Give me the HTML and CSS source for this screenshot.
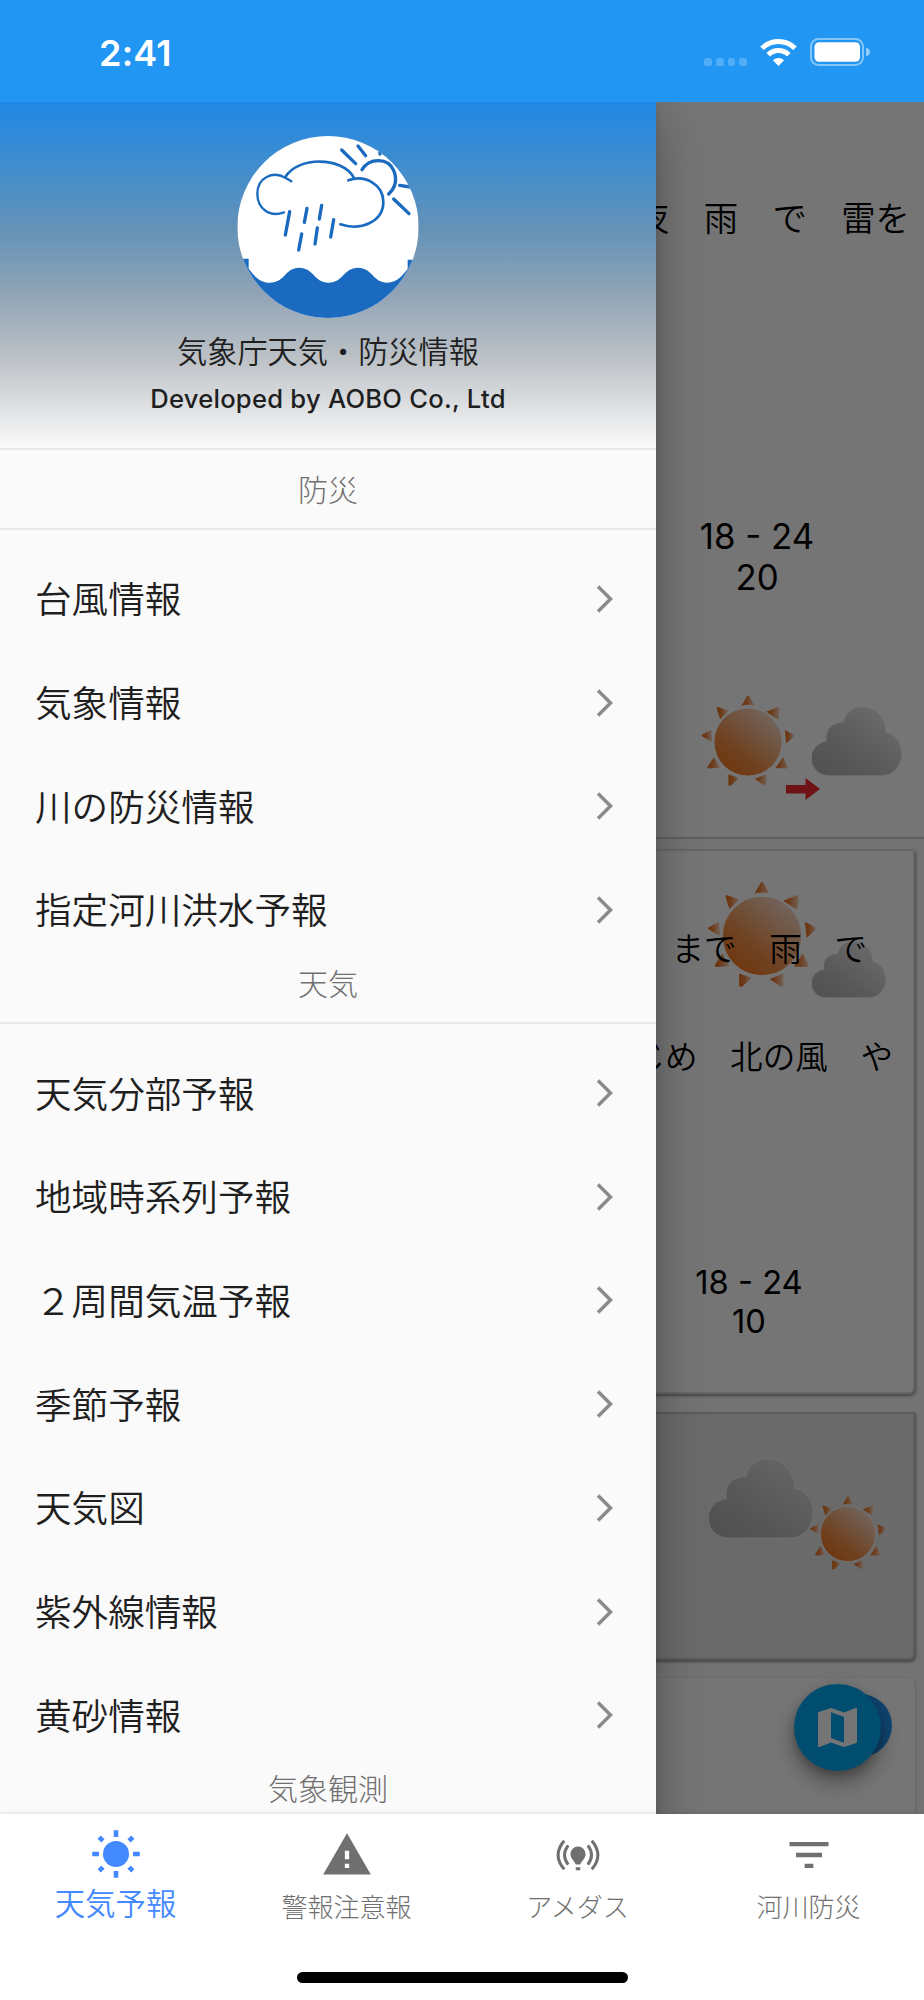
FILE: index.html
```html
<!DOCTYPE html>
<html lang="ja">
<head>
<meta charset="utf-8">
<title>気象庁天気・防災情報</title>
<link rel="stylesheet" href="styles.css">
</head>
<body>
<svg class="defs" width="0" height="0" aria-hidden="true">
  <defs>
    <linearGradient id="sunFill" x1="0.15" y1="0.95" x2="0.85" y2="0.1">
      <stop offset="0" stop-color="#f0761c"/>
      <stop offset="0.35" stop-color="#f39049"/>
      <stop offset="1" stop-color="#f8dccb"/>
    </linearGradient>
    <linearGradient id="rayFill" x1="0" y1="0" x2="1" y2="0">
      <stop offset="0" stop-color="#e86c14"/>
      <stop offset="0.4" stop-color="#ee843c"/>
      <stop offset="1" stop-color="#f8d8c4"/>
    </linearGradient>
    <linearGradient id="cloudFill" x1="0.1" y1="0.9" x2="0.85" y2="0.1">
      <stop offset="0" stop-color="#b4b4b4"/>
      <stop offset="0.3" stop-color="#bebebe"/>
      <stop offset="1" stop-color="#e8e8e8"/>
    </linearGradient>
    <linearGradient id="cloudFillDark" x1="0.1" y1="0.9" x2="0.85" y2="0.1">
      <stop offset="0" stop-color="#b2b2b2"/>
      <stop offset="0.3" stop-color="#bababa"/>
      <stop offset="1" stop-color="#dcdcdc"/>
    </linearGradient>
    <symbol id="sun" viewBox="-51.500 -51.500 103 103">
      <circle r="36.500" fill="url(#sunFill)" stroke="#fff" stroke-width="1"/>
      <g fill="url(#rayFill)">
        <path d="M-6.9-39L-1.2-49Q0-50.6 1.2-49L6.9-39Q0-41 -6.9-39Z"/>
        <path d="M19.500-32.5L32-37.5Q34-38 34-36.500L32.500-24Z"/>
        <path d="M39.5-13L49-8Q50.500-7 49-5.500L41 1.500Z"/>
        <path d="M37.500 16L43 27Q43 28.500 41 28.500L29.500 28Z"/>
        <path d="M7 39.500L19.500 34.500L20 45Q19.500 47.500 17.500 46.500Z"/>
        <path d="M-21 34.500L-9.500 38.500L-18 46.500Q-20.500 47.500-21 45.500Z"/>
        <path d="M-36.500 16L-30 27.500L-42 28.500Q-44 28-43 26Z"/>
        <path d="M-39.500-13L-38.500 0L-49-6Q-50.500-7-49-8Z"/>
        <path d="M-32-37.500L-21-33.500L-30-24.500L-33.500-36Q-33.500-38-32-37.500Z"/>
      </g>
    </symbol>
    <symbol id="cloud" viewBox="516 142 271 208">
      <path d="M569 348A51 51 0 0 1 561 246C554 216 572 188 612 189C615 163 637 144 667 144C707 144 738 175 737 220C765 222 785 250 785 282C785 320 760 348 725 348Z" fill="url(#cloudFill)" stroke="#dcdcdc" stroke-width="2"/>
    </symbol>
    <symbol id="cloudDark" viewBox="516 142 271 208">
      <path d="M569 348A51 51 0 0 1 561 246C554 216 572 188 612 189C615 163 637 144 667 144C707 144 738 175 737 220C765 222 785 250 785 282C785 320 760 348 725 348Z" fill="url(#cloudFillDark)" stroke="#f4f4f4" stroke-width="2.500"/>
    </symbol>
    <symbol id="chevron" viewBox="0 0 20 30">
      <path d="M3 2.500L15.500 15L3 27.500" fill="none" stroke="#8a8a8a" stroke-width="3.500"/>
    </symbol>
  </defs>
</svg>

<div class="phone">
  <header class="status-bar">
    <span class="clock">2:41</span>
    <span class="status-icons">
      <span class="signal"><i></i><i></i><i></i><i></i></span>
      <svg class="wifi" viewBox="0 0 37 27">
        <path d="M2 9.300A23.500 23.500 0 0 1 35 9.300" fill="none" stroke="#fff" stroke-width="5"/>
        <path d="M8.200 15.700A14.500 14.500 0 0 1 28.800 15.700" fill="none" stroke="#fff" stroke-width="5"/>
        <path d="M18.500 27L12.900 21.200A8 8 0 0 1 24.100 21.200Z" fill="#fff"/>
      </svg>
      <svg class="battery" viewBox="0 0 60 28">
        <rect x="1" y="1" width="52" height="26" rx="7.500" fill="none" stroke="#fff" stroke-opacity=".45" stroke-width="2"/>
        <rect x="4.500" y="4.300" width="45.500" height="19.400" rx="4.500" fill="#fff"/>
        <path d="M56 9.500Q60 11 60 14T56 18.500Z" fill="#fff" fill-opacity=".5"/>
      </svg>
    </span>
  </header>

  <main class="stage">
    <section class="forecast">
      <article class="card card-today">
        <p class="line">夜　雨　で　雷を</p>
        <div class="rain"><span>18 - 24</span><span>20</span></div>
        <div class="icons">
          <svg class="sun-today"><use href="#sun"/></svg>
          <svg class="cloud-today"><use href="#cloud"/></svg>
          <svg class="arrow" viewBox="0 0 34 22"><path d="M0 7H19.500V0L34 11L19.500 22V15.500H0Z" fill="#f0282e"/></svg>
        </div>
      </article>
      <article class="card card-tomorrow">
        <svg class="sun-tomorrow"><use href="#sun"/></svg>
        <svg class="cloud-tomorrow"><use href="#cloud"/></svg>
        <p class="line">まで　雨　で</p>
        <p class="line wind">じめ　北の風　や</p>
        <div class="rain"><span>18 - 24</span><span>10</span></div>
      </article>
      <article class="card card-after">
        <div class="icons">
          <svg class="cloud-after"><use href="#cloudDark"/></svg>
          <svg class="sun-after"><use href="#sun"/></svg>
        </div>
      </article>
      <article class="card card-next"></article>
      <span class="fab fab-back"></span>
      <span class="fab fab-map">
        <svg viewBox="3 3 18 18"><path d="M20.500 3l-.16.03L15 5.100 9 3 3.360 4.900c-.21.07-.36.25-.36.48V20.500c0 .28.22.5.5.5l.16-.03L9 18.900l6 2.100 5.640-1.900c.21-.07.36-.25.36-.48V3.500c0-.28-.22-.5-.5-.5zM15 19l-6-2.110V5l6 2.110V19z" fill="#fff"/></svg>
      </span>
    </section>
    <div class="scrim"></div>

    <aside class="drawer">
      <div class="drawer-head">
        <svg class="logo" viewBox="53 48 544 546">
          <defs><clipPath id="disc"><ellipse cx="325" cy="321" rx="272" ry="273"/></clipPath></defs>
          <g clip-path="url(#disc)">
            <rect x="53" y="48" width="544" height="546" fill="#fff"/>
            <path d="M53 416H87V446C105 470 122 488 150 488C196 488 196 443 238 443C282 443 284 488 327 488C370 488 372 443 415 443C458 443 460 488 503 488C530 488 548 468 564 447V419H597V594H53Z" fill="#1a6abf"/>
            <g fill="none" stroke="#1a6abf" stroke-linecap="round">
              <path d="M193 277C149 294 113 264 113 221C113 172 160 152 197 173L215 184" stroke-width="7"/>
              <path d="M197 171C235 109 366 109 402 172" stroke-width="8"/>
              <path d="M386 181C436 163 491 193 491 246C491 304 425 334 362 313" stroke-width="8"/>
              <path d="M427 149C450 112 505 113 522 151C533 178 527 203 507 222" stroke-width="10"/>
              <path d="M366 90L408 131M415 78L438 107M540 196L572 201M522 237L568 281M481 97V102" stroke-width="10"/>
              <path d="M210 275L197 345M262 265L254 307M306 256L299 297M246 342L237 390M293 324L286 372M342 299L333 351" stroke-width="10"/>
            </g>
          </g>
        </svg>
        <h1 class="app-name">気象庁天気・防災情報</h1>
        <p class="developer">Developed by AOBO Co., Ltd</p>
      </div>

      <h2 class="group first">防災</h2>
      <ul class="menu">
        <li><span>台風情報</span><svg><use href="#chevron"/></svg></li>
        <li><span>気象情報</span><svg><use href="#chevron"/></svg></li>
        <li><span>川の防災情報</span><svg><use href="#chevron"/></svg></li>
        <li><span>指定河川洪水予報</span><svg><use href="#chevron"/></svg></li>
      </ul>
      <h2 class="group">天気</h2>
      <ul class="menu">
        <li><span>天気分部予報</span><svg><use href="#chevron"/></svg></li>
        <li><span>地域時系列予報</span><svg><use href="#chevron"/></svg></li>
        <li><span>２周間気温予報</span><svg><use href="#chevron"/></svg></li>
        <li><span>季節予報</span><svg><use href="#chevron"/></svg></li>
        <li><span>天気図</span><svg><use href="#chevron"/></svg></li>
        <li><span>紫外線情報</span><svg><use href="#chevron"/></svg></li>
        <li><span>黄砂情報</span><svg><use href="#chevron"/></svg></li>
      </ul>
      <h2 class="group">気象観測</h2>
    </aside>
  </main>

  <nav class="tabs">
    <a class="tab active">
      <svg viewBox="-26 -26 52 52" fill="currentColor">
        <circle r="13"/>
        <path d="M-2.300-23.800H2.300V-17H-2.300ZM-2.300 17H2.300V23.800H-2.300ZM-23.800-2.300H-17V2.300H-23.800ZM17-2.300H23.800V2.300H17Z"/>
        <path transform="rotate(45)" d="M-2.300-23.800H2.300V-18.500H-2.300ZM-2.300 18.500H2.300V23.800H-2.300ZM-23.800-2.300H-18.500V2.300H-23.800ZM18.500-2.300H23.800V2.300H18.500Z"/>
      </svg>
      <span>天気予報</span>
    </a>
    <a class="tab">
      <svg viewBox="0 0 24 24" fill="currentColor"><path d="M1 21h22L12 2 1 21zm12-3h-2v-2h2v2zm0-4h-2v-4h2v4z"/></svg>
      <span>警報注意報</span>
    </a>
    <a class="tab">
      <svg viewBox="-26 -26 52 52" fill="none" stroke="currentColor" stroke-width="3">
        <path d="M-13.800-14.300Q-26 0-13.800 14.300M13.800-14.300Q26 0 13.800 14.300M-9.800-9.600Q-17.200 0-9.800 9.600M9.800-9.600Q17.200 0 9.800 9.600"/>
        <path d="M-2.200 9.500C-3.500 6-7.600 3.500-7.600-1A7.600 7.600 0 0 1 7.600-1C7.600 3.500 3.500 6 2.200 9.500ZM-2.200 12.200H2.200V15.300H-2.200Z" fill="currentColor" stroke="none"/>
      </svg>
      <span>アメダス</span>
    </a>
    <a class="tab">
      <svg viewBox="0 0 24 24" fill="currentColor"><path d="M10 18h4v-2h-4v2zM3 6v2h18V6H3zm3 7h12v-2H6v2z"/></svg>
      <span>河川防災</span>
    </a>
    <span class="home-indicator"></span>
  </nav>
</div>
</body>
</html>
```

FILE: styles.css
```css
* { box-sizing: border-box; margin: 0; padding: 0; }

body {
  font-family: Inter, "Noto Sans CJK JP", sans-serif;
  font-weight: 350;
  color: #1f1f1f;
  background: #fff;
}

svg { display: block; flex: none; overflow: visible; }
.defs { position: absolute; }

.phone {
  display: flex;
  flex-direction: column;
  width: 924px;
  height: 2000px;
  overflow: hidden;
}

/* Status bar */
.status-bar {
  display: flex;
  justify-content: space-between;
  align-items: flex-start;
  height: 102px;
  padding: 38px 54px 0 99px;
  background: #2196f3;
  color: #fff;
}
.clock { font-size: 36px; font-weight: 600; line-height: 30px; letter-spacing: .2px; }
.status-icons { display: flex; align-items: flex-start; }
.signal { display: flex; gap: 4px; margin: 20px 13px 0 0; }
.signal i { width: 7.700px; height: 7.500px; border-radius: 2.500px; background: rgba(255, 255, 255, .22); }
.wifi { width: 37px; height: 27px; margin: 1px 13px 0 0; }
.battery { width: 60px; height: 28px; }

/* Forecast page behind the drawer */
.stage { position: relative; height: 1712px; overflow: hidden; }
.forecast {
  position: relative;
  display: flex;
  flex-direction: column;
  height: 1712px;
  background: #fafafa;
  color: #000;
}
.card { display: flex; flex-direction: column; align-items: flex-end; flex: none; background: #fff; }
.line { line-height: 44px; white-space: pre; }
.rain { display: flex; flex-direction: column; align-items: center; width: 200px; font-weight: 400; }
.icons { position: relative; display: flex; align-items: flex-start; }

.card-today { height: 737px; padding-top: 95px; border-bottom: 2px solid #cfcfcf; font-size: 34.400px; }
.card-today .line { padding-right: 14px; }
.card-today .rain { margin: 275px 67px 97px 0; font-size: 34.800px; line-height: 40.700px; }
.card-today .icons { gap: 16px; padding-right: 22px; }
.sun-today { width: 96px; height: 96px; }
.cloud-today { width: 90px; height: 69px; margin-top: 13px; }
.arrow { position: absolute; left: 86px; top: 84px; width: 34px; height: 22px; }

.card-tomorrow {
  position: relative;
  height: 545px;
  margin: 10px 9px 0 0;
  padding-top: 76px;
  border: 2px solid #dedede;
  border-radius: 0 2px 6px 0;
  box-shadow: 1px 2px 3px rgba(0, 0, 0, .4);
  font-size: 32.600px;
}
.card-tomorrow .line { position: relative; padding-right: 46px; }
.card-tomorrow .wind { margin-top: 64px; padding-right: 20px; }
.card-tomorrow .rain { margin: 184px 64px 0 0; font-size: 32.700px; line-height: 38.700px; }
.sun-tomorrow { position: absolute; left: 704px; top: 29px; width: 112px; height: 112px; }
.cloud-tomorrow { position: absolute; left: 810px; top: 90px; width: 74px; height: 57px; }

.card-after {
  height: 248px;
  margin: 18px 9px 0 0;
  padding: 44px 26px 0 0;
  background: #e6e6e6;
  border: 2px solid #c6c6c6;
  border-radius: 0 0 6px 0;
  box-shadow: 1px 2px 3px rgba(0, 0, 0, .4);
}
.cloud-after { width: 105px; height: 81px; }
.sun-after { width: 78px; height: 78px; margin: 37px 0 0 -5px; }

.card-next {
  height: 200px;
  margin: 18px 9px 0 0;
  border-radius: 0 8px 8px 0;
  box-shadow: 1px 0 2px rgba(0, 0, 0, .12);
}

.fab { position: absolute; border-radius: 50%; }
.fab-back { left: 829px; top: 1592px; width: 63px; height: 63px; background: #2196f3; }
.fab-map {
  display: flex;
  align-items: center;
  justify-content: center;
  left: 794px;
  top: 1582px;
  width: 87px;
  height: 87px;
  background: #03a9f4;
  box-shadow: 0 11px 22px rgba(0, 0, 0, .35), 0 4px 10px rgba(0, 0, 0, .2);
}
.fab-map svg { width: 39px; height: 39px; }

.scrim { position: absolute; inset: 0; background: rgba(0, 0, 0, .54); }

/* Navigation drawer */
.drawer {
  position: absolute;
  left: 0;
  top: 0;
  width: 656px;
  height: 1760px;
  background: #fafafa;
  box-shadow: 0 20px 46px rgba(0, 0, 0, .3), 0 0 8px rgba(0, 0, 0, .1);
}
.drawer-head {
  display: flex;
  flex-direction: column;
  align-items: center;
  height: 348px;
  padding-top: 34px;
  border-bottom: 2px solid #e8e8e8;
  background: linear-gradient(#1e88e5 0%, #6292b8 36%, #8da2b5 54%, #bcc1c6 74%, #fafafa 100%);
}
.logo { width: 182px; height: 182px; }
.app-name { margin-top: 12px; font-size: 30.200px; font-weight: 350; line-height: 44px; }
.developer { margin-top: 9px; font-size: 25.600px; font-weight: 500; line-height: 32px; letter-spacing: .25px; }

.group {
  height: 61.500px;
  border-bottom: 2px solid #e8e8e8;
  font-size: 30px;
  font-weight: 300;
  line-height: 42px;
  text-align: center;
  color: #707070;
}
.group.first { height: 80px; padding-top: 19px; }

.menu { padding-top: 18px; list-style: none; }
.menu li {
  display: flex;
  align-items: center;
  justify-content: space-between;
  height: 103.700px;
  padding: 0 41px 2px 35px;
  font-size: 36.600px;
}
.menu li span { padding-bottom: 2px; }
.menu svg { width: 20px; height: 30px; }

/* Bottom navigation */
.tabs {
  position: relative;
  display: grid;
  grid-template-columns: repeat(4, 1fr);
  height: 186px;
  background: #fff;
  box-shadow: 0 0 5px rgba(0, 0, 0, .15);
}
.tab { display: flex; flex-direction: column; align-items: center; padding-top: 15px; color: #707070; font-size: 26px; font-weight: 300; }
.tab svg { width: 52px; height: 52px; }
.tab span { margin-top: 7px; line-height: 40px; white-space: nowrap; }
.tab.active { padding-top: 14px; color: #448aff; font-size: 30.400px; font-weight: 350; }
.tab.active span { margin-top: 4px; }
.home-indicator {
  position: absolute;
  left: 297px;
  top: 158px;
  width: 331px;
  height: 11px;
  border-radius: 6px;
  background: #000;
}
```
